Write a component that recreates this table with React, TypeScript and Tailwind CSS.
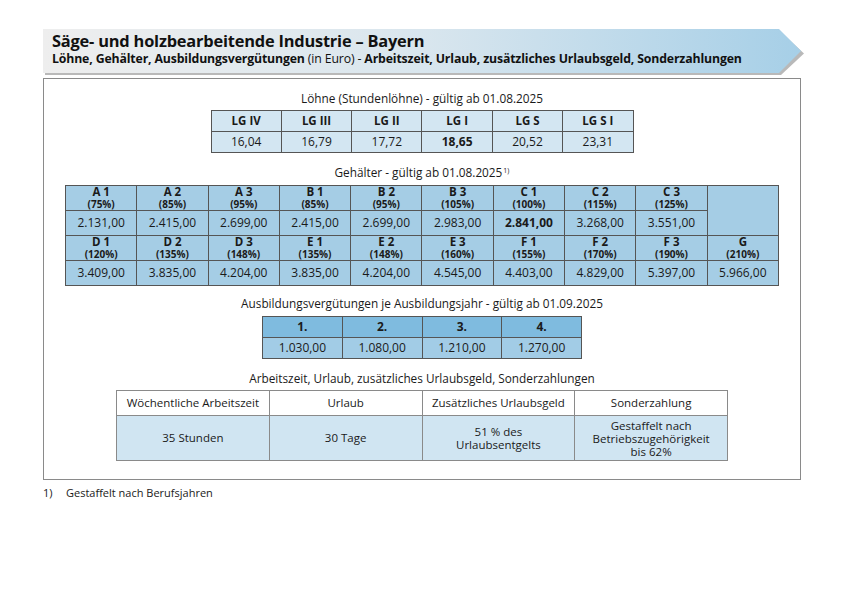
import React from "react";

const lohnHead = ["LG IV", "LG III", "LG II", "LG I", "LG S", "LG S I"];
const lohnVal = ["16,04", "16,79", "17,72", "18,65", "20,52", "23,31"];

const g1 = [
  ["A 1", "(75%)", "2.131,00"],
  ["A 2", "(85%)", "2.415,00"],
  ["A 3", "(95%)", "2.699,00"],
  ["B 1", "(85%)", "2.415,00"],
  ["B 2", "(95%)", "2.699,00"],
  ["B 3", "(105%)", "2.983,00"],
  ["C 1", "(100%)", "2.841,00"],
  ["C 2", "(115%)", "3.268,00"],
  ["C 3", "(125%)", "3.551,00"],
];
const g2 = [
  ["D 1", "(120%)", "3.409,00"],
  ["D 2", "(135%)", "3.835,00"],
  ["D 3", "(148%)", "4.204,00"],
  ["E 1", "(135%)", "3.835,00"],
  ["E 2", "(148%)", "4.204,00"],
  ["E 3", "(160%)", "4.545,00"],
  ["F 1", "(155%)", "4.403,00"],
  ["F 2", "(170%)", "4.829,00"],
  ["F 3", "(190%)", "5.397,00"],
  ["G", "(210%)", "5.966,00"],
];

const azubi = [
  ["1.", "1.030,00"],
  ["2.", "1.080,00"],
  ["3.", "1.210,00"],
  ["4.", "1.270,00"],
];

function HeadCell({ a, b }: { a: string; b: string }) {
  return (
    <td className="border border-[#555] text-center p-0 align-middle">
      <div className="font-bold text-[11.5px] leading-[12px]">{a}</div>
      <div className="font-bold text-[10px] leading-[12px]">{b}</div>
    </td>
  );
}

export default function App() {
  const font = { fontFamily: '"Open Sans", "Noto Sans", sans-serif' };
  return (
    <div className="w-[848px] h-[600px] bg-white text-[#1a1a1a]" style={font}>
      <div className="pl-[43px] pt-[29px] w-[805px]">
        {/* Banner */}
        <div className="relative h-[44px] w-[759px]">
          <div className="absolute left-[2px] top-[3px] h-[43px] w-[759px] bg-[#b9b9b9] [clip-path:polygon(0_0,736px_0,759px_50%,736px_100%,0_100%)]" />
          <div className="absolute inset-0 bg-gradient-to-r from-[#eeeeee] via-[#d9e6ee] to-[#a6cfe7] [clip-path:polygon(0_0,736px_0,758px_50%,736px_100%,0_100%)]" />
          <div className="relative pl-[9px] pt-[4px] leading-none">
            <div className="text-[16.4px] font-bold tracking-[-0.2px] text-[#111]">
              Säge- und holzbearbeitende Industrie – Bayern
            </div>
            <div className="mt-[4px] text-[12.3px] tracking-[-0.15px] text-[#111]">
              <span className="font-bold">Löhne, Gehälter, Ausbildungsvergütungen</span> (in Euro) -{" "}
              <span className="font-bold">Arbeitszeit, Urlaub, zusätzliches Urlaubsgeld, Sonderzahlungen</span>
            </div>
          </div>
        </div>

        {/* Main frame */}
        <div className="mt-[5px] w-[758px] h-[402px] border border-[#8a8a8a] flex flex-col items-center text-[12px]">
          <div className="mt-[11px] h-[16px] leading-[16px] text-[11.8px]">
            Löhne (Stundenlöhne) - gültig ab 01.08.2025
          </div>
          <table className="mt-[4px] border-collapse w-[423px] table-fixed">
            <tbody>
              <tr className="h-[21px] bg-[#d3e6f2]">
                {lohnHead.map((h) => (
                  <td key={h} className="border border-[#555] text-center font-bold text-[11.5px] leading-none p-0">
                    {h}
                  </td>
                ))}
              </tr>
              <tr className="h-[21px] bg-[#d3e6f2]">
                {lohnVal.map((v, i) => (
                  <td key={i} className={`border border-[#555] text-center leading-none p-0 ${i === 3 ? "font-bold" : ""}`}>
                    {v}
                  </td>
                ))}
              </tr>
            </tbody>
          </table>

          <div className="mt-[11px] h-[16px] leading-[16px] text-[11.8px]">
            Gehälter - gültig ab 01.08.2025<sup className="text-[7px] ml-[1px] -top-[4px]">1)</sup>
          </div>
          <table className="mt-[5px] border-collapse w-[714px] table-fixed bg-[#a5cde5]">
            <tbody>
              <tr className="h-[25px]">
                {g1.map((c) => (
                  <HeadCell key={c[0]} a={c[0]} b={c[1]} />
                ))}
                <td rowSpan={2} className="border border-[#555] p-0" />
              </tr>
              <tr className="h-[25px]">
                {g1.map((c, i) => (
                  <td key={i} className={`border border-[#555] text-center p-0 leading-none ${i === 6 ? "font-bold" : ""}`}>
                    {c[2]}
                  </td>
                ))}
              </tr>
              <tr className="h-[25px]">
                {g2.map((c) => (
                  <HeadCell key={c[0]} a={c[0]} b={c[1]} />
                ))}
              </tr>
              <tr className="h-[25px]">
                {g2.map((c, i) => (
                  <td key={i} className="border border-[#555] text-center p-0 leading-none">
                    {c[2]}
                  </td>
                ))}
              </tr>
            </tbody>
          </table>

          <div className="mt-[9px] h-[16px] leading-[16px] text-[11.8px]">
            Ausbildungsvergütungen je Ausbildungsjahr - gültig ab 01.09.2025
          </div>
          <table className="mt-[5px] border-collapse w-[320px] table-fixed">
            <tbody>
              <tr className="h-[21px] bg-[#7fbbdf]">
                {azubi.map((a) => (
                  <td key={a[0]} className="border border-[#555] text-center font-bold p-0 leading-none">
                    {a[0]}
                  </td>
                ))}
              </tr>
              <tr className="h-[21px] bg-[#a2cce6]">
                {azubi.map((a) => (
                  <td key={a[1]} className="border border-[#555] text-center p-0 leading-none">
                    {a[1]}
                  </td>
                ))}
              </tr>
            </tbody>
          </table>

          <div className="mt-[11px] h-[16px] leading-[16px] text-[11.8px]">
            Arbeitszeit, Urlaub, zusätzliches Urlaubsgeld, Sonderzahlungen
          </div>
          <table className="mt-[4px] border-collapse w-[612px] table-fixed text-[11.5px]">
            <tbody>
              <tr className="h-[25px] bg-white">
                {["Wöchentliche Arbeitszeit", "Urlaub", "Zusätzliches Urlaubsgeld", "Sonderzahlung"].map((h) => (
                  <td key={h} className="border border-[#8a8a8a] text-center p-0 leading-none">
                    {h}
                  </td>
                ))}
              </tr>
              <tr className="h-[45px] bg-[#d0e5f2]">
                <td className="border border-[#8a8a8a] text-center p-0">35 Stunden</td>
                <td className="border border-[#8a8a8a] text-center p-0">30 Tage</td>
                <td className="border border-[#8a8a8a] text-center p-0 leading-[13px]">
                  51 % des
                  <br />
                  Urlaubsentgelts
                </td>
                <td className="border border-[#8a8a8a] text-center p-0 leading-[13px]">
                  Gestaffelt nach
                  <br />
                  Betriebszugehörigkeit
                  <br />
                  bis 62%
                </td>
              </tr>
            </tbody>
          </table>
        </div>

        {/* Footnote */}
        <div className="mt-[6px] flex text-[11px] leading-[14px]">
          <span className="w-[23px]">1)</span>
          <span>Gestaffelt nach Berufsjahren</span>
        </div>
      </div>
    </div>
  );
}
